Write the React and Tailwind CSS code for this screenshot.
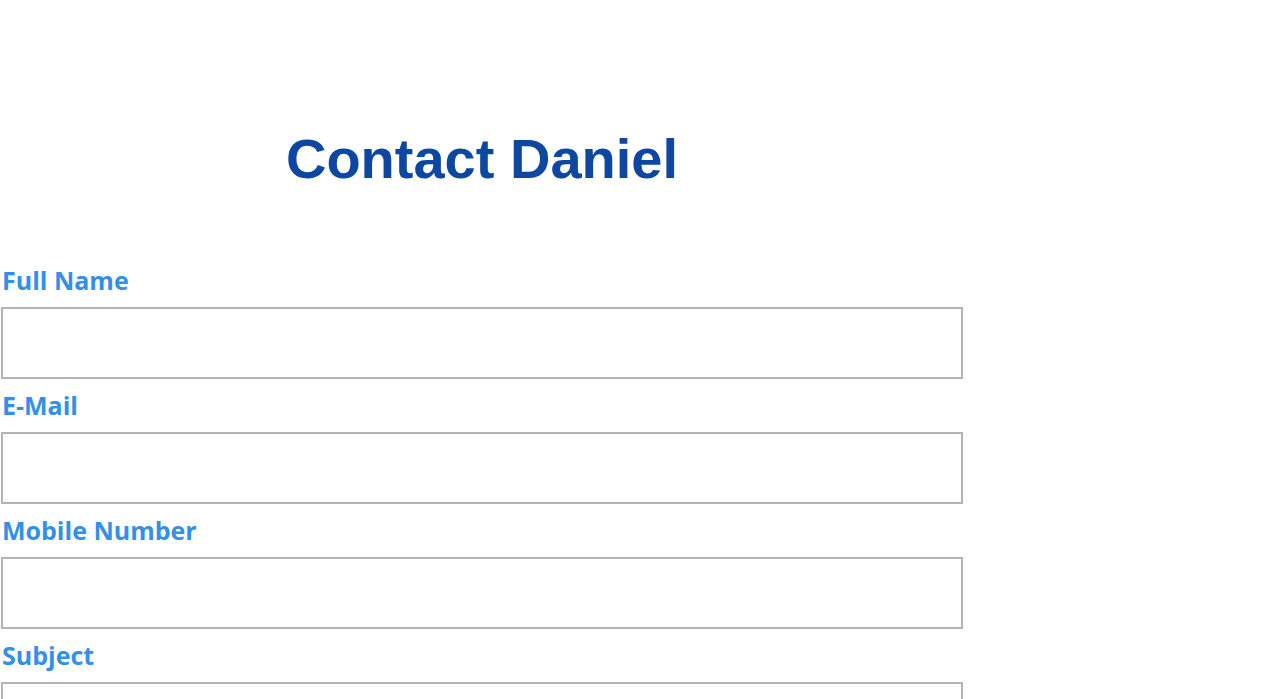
export default function App() {
  const fields = ["Full Name", "E-Mail", "Mobile Number", "Subject"];
  return (
    <div className="w-[1271px] h-[699px] overflow-hidden bg-white">
      <div className="w-[964px]">
        <h1 className="pt-[119px] h-[199px] text-center text-[56px] leading-[80px] font-bold text-[#0d47a1] [font-family:'Liberation_Sans',Arial,sans-serif]">
          Contact Daniel
        </h1>
        <form className="mt-[65px] flex flex-col gap-[10px]">
          {fields.map((f) => (
            <div key={f} className="flex flex-col">
              <label className="h-[32px] leading-[32px] pl-[2px] text-[25px] font-bold text-[#3390e8] [font-family:'Open_Sans',sans-serif] mb-[11px]">
                {f}
              </label>
              <input className="h-[72px] w-[962px] ml-[1px] border-2 border-[#b4b4b4] bg-white outline-none" />
            </div>
          ))}
        </form>
      </div>
    </div>
  );
}
